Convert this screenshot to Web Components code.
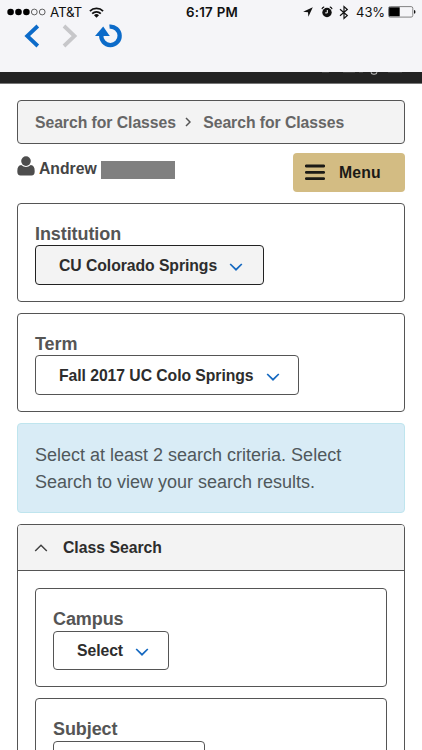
<!DOCTYPE html>
<html lang="en">
<head>
<meta charset="utf-8">
<title>Class Search</title>
<style>
html,body{margin:0;height:750px;overflow:hidden;background:#fff}
body{font-family:"Liberation Sans",Arial,sans-serif;color:#555}
</style>
</head>
<body>
<class-search-app></class-search-app>
<script>
function define(name, html) {
  const tpl = document.createElement('template');
  tpl.innerHTML = html;
  customElements.define(name, class extends HTMLElement {
    constructor() {
      super();
      this.attachShadow({mode: 'open'}).append(tpl.content.cloneNode(true));
    }
  });
}

define('status-bar', `
<style>
:host{display:grid;grid-template-columns:1fr auto 1fr;align-items:center;height:24px;padding:0 6px 0 7px;color:#111;font:13px/24px Inter,"Liberation Sans",sans-serif}
div{display:flex;align-items:center}
.time{font-weight:600;font-size:13.300px;letter-spacing:.28px;padding-left:1px}
.right{justify-content:flex-end}
svg{display:block;flex:none}
.carrier{margin:0 7px 0 4px;font-size:13.400px;letter-spacing:-.2px}
.pct{margin:0 3px 0 7px;letter-spacing:-.1px}
</style>
<div>
 <svg width="39" height="8" viewBox="0 0 39 8"><g fill="#000"><circle cx="3.6" cy="4" r="3.3"/><circle cx="11.5" cy="4" r="3.3"/><circle cx="19.4" cy="4" r="3.3"/></g><g fill="none" stroke="#222" stroke-width=".7"><circle cx="27.3" cy="4" r="2.9"/><circle cx="35.2" cy="4" r="2.9"/></g></svg>
 <span class="carrier">AT&amp;T</span>
 <svg width="15" height="11" viewBox="0 0 15 11"><g fill="none" stroke="#111" stroke-width="1.7"><path d="M.9 4.2a9.3 9.3 0 0 1 13.2 0"/><path d="M3.2 6.6a6.1 6.1 0 0 1 8.6 0"/></g><path d="M5 8.2a3.6 3.6 0 0 1 5 0L7.500 10.800z" fill="#111"/></svg>
</div>
<div class="time">6:17 PM</div>
<div class="right">
 <svg style="margin-right:1px" width="10" height="10" viewBox="0 0 10 10"><path d="M9.800.2 5.400 9.800 5 5.200.1 4.800z" fill="#111"/></svg>
 <svg style="margin-left:7px" width="12" height="12" viewBox="0 0 12 12"><circle cx="6" cy="6.500" r="4.700" fill="#111"/><path d="M.9 3.200A3 3 0 0 1 3.200.9M8.800.9A3 3 0 0 1 11.100 3.200" fill="none" stroke="#111" stroke-width="1.100"/><path d="M6.300 4v2.900H4.200" fill="none" stroke="#fff" stroke-width="1"/></svg>
 <svg style="margin-left:6px" width="10" height="15" viewBox="0 0 10 14"><path d="M1 3.800 8.300 10 5 13V1l3.300 3L1 10.200" fill="none" stroke="#111" stroke-width="1.200"/></svg>
 <span class="pct">43%</span>
 <svg width="28" height="12" viewBox="0 0 28 12"><rect x=".5" y=".6" width="24.300" height="10.500" rx="1.700" fill="none" stroke="#777" stroke-width=".9"/><path d="M1.100 1.300h10.600v9H1.100z" fill="#000"/><path d="M26 4q1.500.3 1.500 1.900T26 7.800z" fill="#111"/></svg>
</div>`);

define('browser-nav', `
<style>
:host{display:flex;align-items:flex-start;height:48px;padding-left:24px;box-sizing:border-box}
svg{display:block}
.next{margin-left:22px}.reload{margin-left:17px}
</style>
<svg width="16" height="24" viewBox="0 0 16 24"><path d="M13.800 2 3.200 12l10.600 10" fill="none" stroke="#0c6bc9" stroke-width="3.800"/></svg>
<svg class="next" width="16" height="24" viewBox="0 0 16 24"><path d="M2 2l10.500 10L2 22" fill="none" stroke="#c7c7ca" stroke-width="3.800"/></svg>
<svg class="reload" width="28" height="24" viewBox="0 0 28 24"><path d="M14.500 2.700A9.200 9.200 0 1 1 6.300 11" fill="none" stroke="#0c6bc9" stroke-width="4.300"/><path d="M0 12 8.200 2.600 14.800 12z" fill="#0c6bc9"/></svg>`);

define('page-banner', `
<style>
:host{display:block;height:11px;background:#232323;border-bottom:1px solid #777}
svg{display:block;margin-left:auto}
</style><svg width="102" height="4" viewBox="0 0 102 4"><path d="M51 .3Q51.500 2.300 54 2.300T57 .3" fill="none" stroke="#ccc" stroke-width="1.100"/><path d="M2 .2h7M23 .2h12M39 .2h4M68 .2h14" stroke="#777" stroke-width=".5"/></svg>`);

define('crumb-bar', `
<style>
:host{display:flex;align-items:center;box-sizing:border-box;height:44px;padding:2px 0 0 17px;border:1px solid #555;border-radius:4px;background:#f3f3f3;color:#666;font-weight:bold;font-size:15.750px;letter-spacing:-.05px}
svg{margin:-3px 12px 0 9.300px;flex:none}
::slotted(span){white-space:nowrap}
</style>
<slot name="parent"></slot>
<svg width="6" height="10" viewBox="0 0 6 10"><path d="M1 1l4 4-4 4" fill="none" stroke="#555" stroke-width="1.500"/></svg>
<slot></slot>`);

define('user-row', `
<style>
:host{display:flex;justify-content:space-between;align-items:flex-start;padding:9px 0 11px;color:#555;font-weight:bold;font-size:15.750px}
.user{display:flex;padding-top:3px}
.user svg{display:block}
.name{line-height:18px;margin:4px 4px 0 4px;color:#444}
.redact{width:74px;height:18px;margin-top:5px;background:#808080}
button{display:flex;align-items:center;width:112px;height:39px;padding:0 0 0 12px;border:0;border-radius:4px;background:#d3bc83;color:#1b1a16;font:bold 15.750px "Liberation Sans",sans-serif;letter-spacing:.2px}
button svg{margin-right:14px}
</style>
<div class="user">
 <svg width="18" height="21" viewBox="0 0 18 21"><ellipse cx="9" cy="5.100" rx="4.800" ry="4.800" fill="#4d4d4d"/><path d="M4.200 9Q9 12.800 13.800 9 17.700 9.300 17.700 15.200 17.700 19.500 14.500 19.500H3.500Q.3 19.500 .3 15.200.3 9.300 4.200 9z" fill="#4d4d4d"/></svg>
 <span class="name"><slot></slot></span><span class="redact"></span>
</div>
<button><svg width="20" height="17" viewBox="0 0 20 17"><path d="M1.300 2h17.400M1.300 8.300h17.400M1.300 14.600h17.400" stroke="#1b1a16" stroke-width="2.800" stroke-linecap="round"/></svg>Menu</button>`);

define('select-button', `
<style>
:host{display:flex;align-items:center;box-sizing:border-box;width:var(--w);height:40px;padding:1px 0 0 23px;border:1px solid var(--line,#555);border-radius:4px;background:var(--fill,#fff);color:#2d2d2d;font-weight:bold;font-size:15.750px;letter-spacing:-.06px;white-space:nowrap}
svg{margin:2px 0 0 12px}
</style>
<slot></slot><svg width="14" height="8" viewBox="0 0 14 8"><path d="M1.200 1 7 6.700 12.800 1" fill="none" stroke="#1468c0" stroke-width="1.700"/></svg>`);

define('field-panel', `
<style>
:host{display:block;box-sizing:border-box;height:99px;padding:20px 17px 0;border:1px solid #555;border-radius:4px;background:#fff}
.label{font-weight:bold;font-size:18px;line-height:21px;letter-spacing:-.08px;color:#555;padding-bottom:var(--label-gap,0)}
</style>
<div class="label"><slot name="label"></slot></div><slot></slot>`);

define('info-alert', `
<style>
:host{display:block;box-sizing:border-box;height:90px;padding:18px 17px 0;border:1px solid #bfe5ee;border-radius:4px;background:#d9ecf6;color:#50585c;font-size:18px;line-height:27px}
</style><slot></slot>`);

define('collapse-section', `
<style>
:host{display:block;box-sizing:border-box;border:1px solid #555;border-radius:4px;height:260px;overflow:hidden}
header{display:flex;align-items:center;height:45px;padding-left:16px;border-bottom:1px solid #555;background:#f3f3f3;color:#2d2d2d;font-weight:bold;font-size:15.750px}
slot[name=title]{display:block;padding-top:1px}
header svg{margin-right:15px}
.body{display:grid;gap:11px;padding:17px 17px 0}
</style>
<header><svg width="14" height="8" viewBox="0 0 14 8"><path d="M1.200 7 7 1.200 12.800 7" fill="none" stroke="#444" stroke-width="1.500"/></svg><slot name="title"></slot></header>
<div class="body"><slot></slot></div>`);

define('class-search-app', `
<style>
:host{display:block;height:750px;overflow:hidden}
.chrome{background:#f5f5f8}
main{padding:16px 17px 0}
.first{height:110px}.second{height:110px}
.alert{height:101px}
collapse-section select-button{height:39px}
collapse-section field-panel{--label-gap:1px}
</style>
<div class="chrome"><status-bar></status-bar><browser-nav></browser-nav></div>
<page-banner></page-banner>
<main>
 <crumb-bar><span slot="parent">Search for Classes</span><span>Search for Classes</span></crumb-bar>
 <user-row>Andrew</user-row>
 <div class="first"><field-panel><span slot="label">Institution</span><select-button style="--w:229px;--fill:#f3f3f3;--line:#222">CU Colorado Springs</select-button></field-panel></div>
 <div class="second"><field-panel><span slot="label">Term</span><select-button style="--w:264px">Fall 2017 UC Colo Springs</select-button></field-panel></div>
 <div class="alert"><info-alert>Select at least 2 search criteria. Select Search to view your search results.</info-alert></div>
 <collapse-section><span slot="title">Class Search</span>
  <field-panel><span slot="label">Campus</span><select-button style="--w:116px">Select</select-button></field-panel>
  <field-panel><span slot="label">Subject</span><select-button style="--w:152px"></select-button></field-panel>
 </collapse-section>
</main>`);
</script>
</body>
</html>
